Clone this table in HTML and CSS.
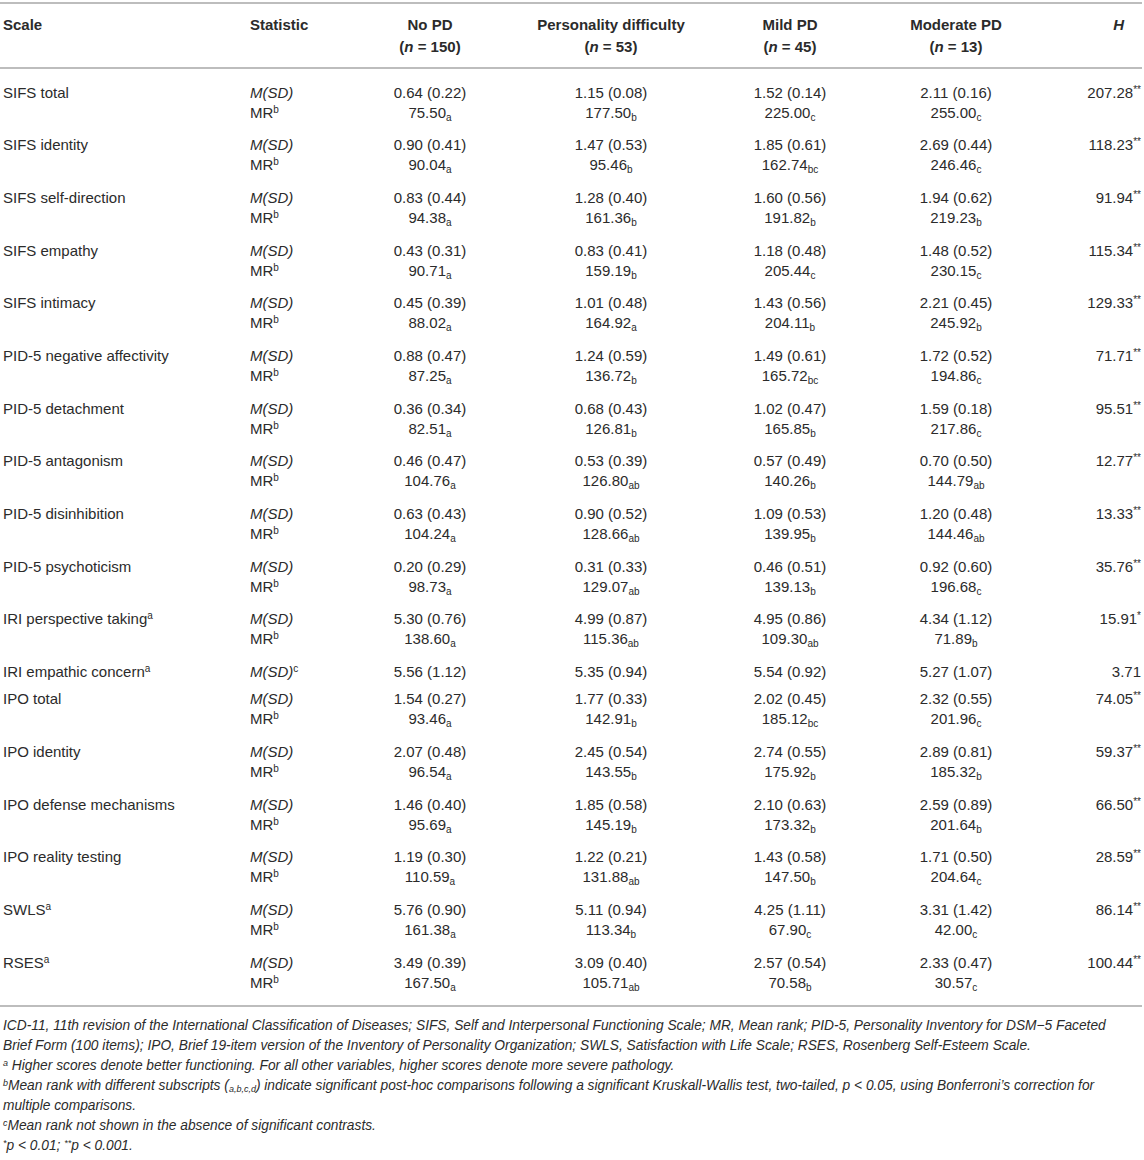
FILE: index.html
```html
<!DOCTYPE html>
<html>
<head>
<meta charset="utf-8">
<link rel="stylesheet" href="styles.css">
</head>
<body>
<div class="page">
<table class="data">
<colgroup>
<col class="c-scale"><col class="c-stat"><col class="c-g1"><col class="c-g2"><col class="c-g3"><col class="c-g4"><col class="c-h">
</colgroup>
<thead>
<tr>
<th class="l">Scale</th>
<th class="l">Statistic</th>
<th>No PD<br>(<i>n</i> = 150)</th>
<th>Personality difficulty<br>(<i>n</i> = 53)</th>
<th>Mild PD<br>(<i>n</i> = 45)</th>
<th>Moderate PD<br>(<i>n</i> = 13)</th>
<th class="h"><i>H</i></th>
</tr>
</thead>
<tbody>
<tr class="m first"><td class="l">SIFS total</td><td class="l"><i>M(SD)</i></td><td>0.64 (0.22)</td><td>1.15 (0.08)</td><td>1.52 (0.14)</td><td>2.11 (0.16)</td><td class="h">207.28<sup>**</sup></td></tr>
<tr class="r"><td></td><td class="l">MR<sup>b</sup></td><td>75.50<sub>a</sub></td><td>177.50<sub>b</sub></td><td>225.00<sub>c</sub></td><td>255.00<sub>c</sub></td><td></td></tr>
<tr class="m"><td class="l">SIFS identity</td><td class="l"><i>M(SD)</i></td><td>0.90 (0.41)</td><td>1.47 (0.53)</td><td>1.85 (0.61)</td><td>2.69 (0.44)</td><td class="h">118.23<sup>**</sup></td></tr>
<tr class="r"><td></td><td class="l">MR<sup>b</sup></td><td>90.04<sub>a</sub></td><td>95.46<sub>b</sub></td><td>162.74<sub>bc</sub></td><td>246.46<sub>c</sub></td><td></td></tr>
<tr class="m"><td class="l">SIFS self-direction</td><td class="l"><i>M(SD)</i></td><td>0.83 (0.44)</td><td>1.28 (0.40)</td><td>1.60 (0.56)</td><td>1.94 (0.62)</td><td class="h">91.94<sup>**</sup></td></tr>
<tr class="r"><td></td><td class="l">MR<sup>b</sup></td><td>94.38<sub>a</sub></td><td>161.36<sub>b</sub></td><td>191.82<sub>b</sub></td><td>219.23<sub>b</sub></td><td></td></tr>
<tr class="m"><td class="l">SIFS empathy</td><td class="l"><i>M(SD)</i></td><td>0.43 (0.31)</td><td>0.83 (0.41)</td><td>1.18 (0.48)</td><td>1.48 (0.52)</td><td class="h">115.34<sup>**</sup></td></tr>
<tr class="r"><td></td><td class="l">MR<sup>b</sup></td><td>90.71<sub>a</sub></td><td>159.19<sub>b</sub></td><td>205.44<sub>c</sub></td><td>230.15<sub>c</sub></td><td></td></tr>
<tr class="m"><td class="l">SIFS intimacy</td><td class="l"><i>M(SD)</i></td><td>0.45 (0.39)</td><td>1.01 (0.48)</td><td>1.43 (0.56)</td><td>2.21 (0.45)</td><td class="h">129.33<sup>**</sup></td></tr>
<tr class="r"><td></td><td class="l">MR<sup>b</sup></td><td>88.02<sub>a</sub></td><td>164.92<sub>a</sub></td><td>204.11<sub>b</sub></td><td>245.92<sub>b</sub></td><td></td></tr>
<tr class="m"><td class="l">PID-5 negative affectivity</td><td class="l"><i>M(SD)</i></td><td>0.88 (0.47)</td><td>1.24 (0.59)</td><td>1.49 (0.61)</td><td>1.72 (0.52)</td><td class="h">71.71<sup>**</sup></td></tr>
<tr class="r"><td></td><td class="l">MR<sup>b</sup></td><td>87.25<sub>a</sub></td><td>136.72<sub>b</sub></td><td>165.72<sub>bc</sub></td><td>194.86<sub>c</sub></td><td></td></tr>
<tr class="m"><td class="l">PID-5 detachment</td><td class="l"><i>M(SD)</i></td><td>0.36 (0.34)</td><td>0.68 (0.43)</td><td>1.02 (0.47)</td><td>1.59 (0.18)</td><td class="h">95.51<sup>**</sup></td></tr>
<tr class="r"><td></td><td class="l">MR<sup>b</sup></td><td>82.51<sub>a</sub></td><td>126.81<sub>b</sub></td><td>165.85<sub>b</sub></td><td>217.86<sub>c</sub></td><td></td></tr>
<tr class="m"><td class="l">PID-5 antagonism</td><td class="l"><i>M(SD)</i></td><td>0.46 (0.47)</td><td>0.53 (0.39)</td><td>0.57 (0.49)</td><td>0.70 (0.50)</td><td class="h">12.77<sup>**</sup></td></tr>
<tr class="r"><td></td><td class="l">MR<sup>b</sup></td><td>104.76<sub>a</sub></td><td>126.80<sub>ab</sub></td><td>140.26<sub>b</sub></td><td>144.79<sub>ab</sub></td><td></td></tr>
<tr class="m"><td class="l">PID-5 disinhibition</td><td class="l"><i>M(SD)</i></td><td>0.63 (0.43)</td><td>0.90 (0.52)</td><td>1.09 (0.53)</td><td>1.20 (0.48)</td><td class="h">13.33<sup>**</sup></td></tr>
<tr class="r"><td></td><td class="l">MR<sup>b</sup></td><td>104.24<sub>a</sub></td><td>128.66<sub>ab</sub></td><td>139.95<sub>b</sub></td><td>144.46<sub>ab</sub></td><td></td></tr>
<tr class="m"><td class="l">PID-5 psychoticism</td><td class="l"><i>M(SD)</i></td><td>0.20 (0.29)</td><td>0.31 (0.33)</td><td>0.46 (0.51)</td><td>0.92 (0.60)</td><td class="h">35.76<sup>**</sup></td></tr>
<tr class="r"><td></td><td class="l">MR<sup>b</sup></td><td>98.73<sub>a</sub></td><td>129.07<sub>ab</sub></td><td>139.13<sub>b</sub></td><td>196.68<sub>c</sub></td><td></td></tr>
<tr class="m"><td class="l">IRI perspective taking<sup>a</sup></td><td class="l"><i>M(SD)</i></td><td>5.30 (0.76)</td><td>4.99 (0.87)</td><td>4.95 (0.86)</td><td>4.34 (1.12)</td><td class="h">15.91<sup>*</sup></td></tr>
<tr class="r"><td></td><td class="l">MR<sup>b</sup></td><td>138.60<sub>a</sub></td><td>115.36<sub>ab</sub></td><td>109.30<sub>ab</sub></td><td>71.89<sub>b</sub></td><td></td></tr>
<tr class="m single"><td class="l">IRI empathic concern<sup>a</sup></td><td class="l"><i>M(SD)</i><sup>c</sup></td><td>5.56 (1.12)</td><td>5.35 (0.94)</td><td>5.54 (0.92)</td><td>5.27 (1.07)</td><td class="h">3.71</td></tr>
<tr class="m"><td class="l">IPO total</td><td class="l"><i>M(SD)</i></td><td>1.54 (0.27)</td><td>1.77 (0.33)</td><td>2.02 (0.45)</td><td>2.32 (0.55)</td><td class="h">74.05<sup>**</sup></td></tr>
<tr class="r"><td></td><td class="l">MR<sup>b</sup></td><td>93.46<sub>a</sub></td><td>142.91<sub>b</sub></td><td>185.12<sub>bc</sub></td><td>201.96<sub>c</sub></td><td></td></tr>
<tr class="m"><td class="l">IPO identity</td><td class="l"><i>M(SD)</i></td><td>2.07 (0.48)</td><td>2.45 (0.54)</td><td>2.74 (0.55)</td><td>2.89 (0.81)</td><td class="h">59.37<sup>**</sup></td></tr>
<tr class="r"><td></td><td class="l">MR<sup>b</sup></td><td>96.54<sub>a</sub></td><td>143.55<sub>b</sub></td><td>175.92<sub>b</sub></td><td>185.32<sub>b</sub></td><td></td></tr>
<tr class="m"><td class="l">IPO defense mechanisms</td><td class="l"><i>M(SD)</i></td><td>1.46 (0.40)</td><td>1.85 (0.58)</td><td>2.10 (0.63)</td><td>2.59 (0.89)</td><td class="h">66.50<sup>**</sup></td></tr>
<tr class="r"><td></td><td class="l">MR<sup>b</sup></td><td>95.69<sub>a</sub></td><td>145.19<sub>b</sub></td><td>173.32<sub>b</sub></td><td>201.64<sub>b</sub></td><td></td></tr>
<tr class="m"><td class="l">IPO reality testing</td><td class="l"><i>M(SD)</i></td><td>1.19 (0.30)</td><td>1.22 (0.21)</td><td>1.43 (0.58)</td><td>1.71 (0.50)</td><td class="h">28.59<sup>**</sup></td></tr>
<tr class="r"><td></td><td class="l">MR<sup>b</sup></td><td>110.59<sub>a</sub></td><td>131.88<sub>ab</sub></td><td>147.50<sub>b</sub></td><td>204.64<sub>c</sub></td><td></td></tr>
<tr class="m"><td class="l">SWLS<sup>a</sup></td><td class="l"><i>M(SD)</i></td><td>5.76 (0.90)</td><td>5.11 (0.94)</td><td>4.25 (1.11)</td><td>3.31 (1.42)</td><td class="h">86.14<sup>**</sup></td></tr>
<tr class="r"><td></td><td class="l">MR<sup>b</sup></td><td>161.38<sub>a</sub></td><td>113.34<sub>b</sub></td><td>67.90<sub>c</sub></td><td>42.00<sub>c</sub></td><td></td></tr>
<tr class="m"><td class="l">RSES<sup>a</sup></td><td class="l"><i>M(SD)</i></td><td>3.49 (0.39)</td><td>3.09 (0.40)</td><td>2.57 (0.54)</td><td>2.33 (0.47)</td><td class="h">100.44<sup>**</sup></td></tr>
<tr class="r last"><td></td><td class="l">MR<sup>b</sup></td><td>167.50<sub>a</sub></td><td>105.71<sub>ab</sub></td><td>70.58<sub>b</sub></td><td>30.57<sub>c</sub></td><td></td></tr>
</tbody>
</table>
<div class="notes">
<p>ICD-11, 11th revision of the International Classification of Diseases; SIFS, Self and Interpersonal Functioning Scale; MR, Mean rank; PID-5, Personality Inventory for DSM−5 Faceted Brief Form (100 items); IPO, Brief 19-item version of the Inventory of Personality Organization; SWLS, Satisfaction with Life Scale; RSES, Rosenberg Self-Esteem Scale.</p>
<p><sup>a</sup> Higher scores denote better functioning. For all other variables, higher scores denote more severe pathology.</p>
<p><sup>b</sup>Mean rank with different subscripts (<sub>a,b,c,d</sub>) indicate significant post-hoc comparisons following a significant Kruskall-Wallis test, two-tailed, p &lt; 0.05, using Bonferroni’s correction for multiple comparisons.</p>
<p><sup>c</sup>Mean rank not shown in the absence of significant contrasts.</p>
<p><sup>*</sup>p &lt; 0.01; <sup>**</sup>p &lt; 0.001.</p>
</div>
</div>
</body>
</html>
```
FILE: styles.css
```css
html, body {
  margin: 0;
  padding: 0;
  background: #ffffff;
}
body {
  font-family: "Liberation Sans", Arial, sans-serif;
  color: #2b2b2b;
}
.page {
  width: 1142px;
  padding-top: 2px;
}
.data {
  width: 1142px;
  table-layout: fixed;
  border-collapse: collapse;
  border-top: 2px solid #bdbdbd;
  border-bottom: 2px solid #bdbdbd;
  font-size: 15px;
}
.c-scale { width: 247px; }
.c-stat { width: 93px; }
.c-g1 { width: 180px; }
.c-g2 { width: 182px; }
.c-g3 { width: 176px; }
.c-g4 { width: 156px; }
.c-h { width: 108px; }

.data th {
  font-weight: bold;
  text-align: center;
  vertical-align: top;
  line-height: 22px;
  padding: 10px 0 9px 0;
  border-bottom: 2px solid #bdbdbd;
  white-space: nowrap;
}
.data td {
  text-align: center;
  vertical-align: top;
  line-height: 20px;
  padding: 0;
  white-space: nowrap;
}
.data .l {
  text-align: left;
  padding-left: 3px;
}
.data .h {
  text-align: right;
  padding-right: 1px;
}
.data th.h { padding-right: 18px; }
.data tr.m td { padding-top: 6.7px; }
.data tr.r td { padding-bottom: 6px; }
.data tr.m.first td { padding-top: 13.5px; }
.data tr.m.single td { padding-bottom: 0.6px; }
.data tr.r.last td { padding-bottom: 12px; }

sup, sub {
  font-size: 10px;
  line-height: 0;
}
sup { vertical-align: 5px; }
sub { vertical-align: -3px; }

.notes {
  padding: 9px 32px 0 3px;
  font-size: 13.75px;
  font-style: italic;
  line-height: 20px;
}
.notes p { margin: 0; }
.notes sup { font-size: 9px; vertical-align: 4px; }
.notes sub { font-size: 9px; vertical-align: -2px; }
```
